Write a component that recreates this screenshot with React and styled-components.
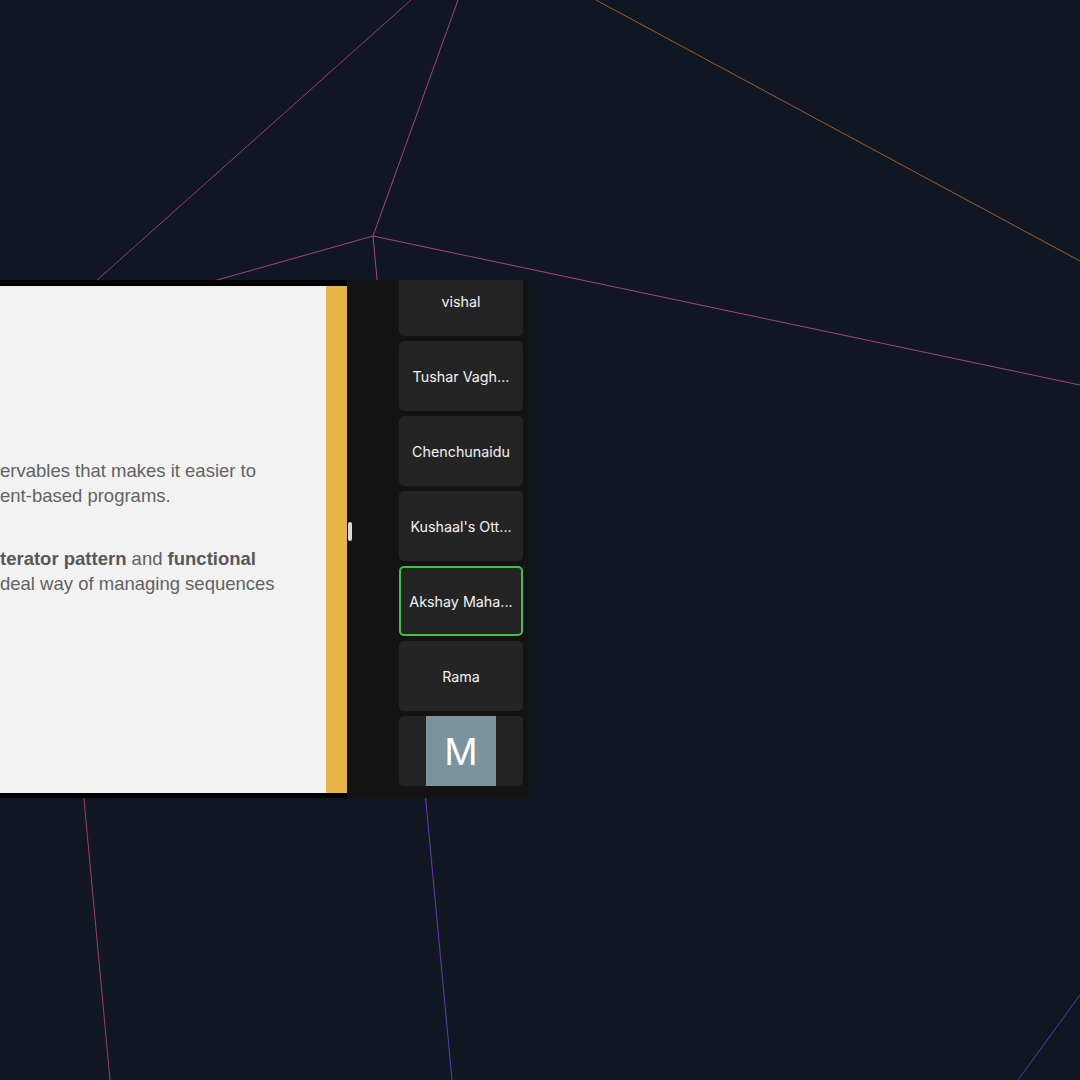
import React from 'react';
import styled, { createGlobalStyle } from 'styled-components';

const GlobalStyle = createGlobalStyle`
  html, body {
    margin: 0;
    padding: 0;
    background: #111722;
  }
  * {
    box-sizing: border-box;
  }
`;

const Page = styled.div`
  position: relative;
  width: 1080px;
  height: 1080px;
  overflow: hidden;
  padding-top: 280px;
  background: #111722;
`;

const Backdrop = styled.svg`
  position: absolute;
  inset: 0;
  width: 1080px;
  height: 1080px;
`;

const Window = styled.div`
  position: relative;
  z-index: 1;
  display: flex;
  width: 529px;
  height: 518px;
`;

const SlideFrame = styled.div`
  width: 347px;
  background: #000;
  padding: 6px 0 5px;
  display: flex;
`;

const Slide = styled.div`
  flex: 1;
  display: flex;
  background: #f2f2f2;
`;

const SlideBody = styled.div`
  flex: 1;
  overflow: hidden;
  padding-top: 172px;
  font-family: "Liberation Sans", Arial, sans-serif;
  font-size: 18.5px;
  line-height: 25px;
  color: #626262;

  p {
    margin: 0 0 38px;
    white-space: nowrap;
  }
  b {
    font-weight: 700;
    color: #585858;
  }
`;

const Accent = styled.div`
  width: 21px;
  background: #ebb44b;
`;

const Sidebar = styled.div`
  flex: 1;
  background: #131313;
  overflow: hidden;
  padding: 0 6px 0 52px;
`;

const TileList = styled.div`
  display: flex;
  flex-direction: column;
  gap: 5px;
  margin-top: -14px;
`;

const Tile = styled.div`
  height: 70px;
  border-radius: 5px;
  background: #242424;
  box-shadow: ${p => (p.$active ? 'inset 0 0 0 2px #3fc24b' : 'none')};
  display: flex;
  align-items: center;
  justify-content: center;
  overflow: hidden;
  font-family: Inter, "Noto Sans", sans-serif;
  font-size: 14.3px;
  color: #f2f2f2;
  white-space: nowrap;
`;

const Avatar = styled.div`
  width: 70px;
  height: 70px;
  background: #7b929f;
  display: flex;
  align-items: center;
  justify-content: center;
  font-family: Inter, "Noto Sans", sans-serif;
  font-size: 37px;
  color: #fff;
`;

const Handle = styled.div`
  position: absolute;
  left: 348px;
  top: 242px;
  width: 4px;
  height: 19px;
  border-radius: 2px;
  background: #d9d9d9;
`;

const people = [
  { name: 'vishal' },
  { name: 'Tushar Vagh...' },
  { name: 'Chenchunaidu' },
  { name: "Kushaal's Ott..." },
  { name: 'Akshay Maha...', active: true },
  { name: 'Rama' },
];

const edges = [
  { x1: 411, y1: 0, x2: 86, y2: 290, c: '#9c4069' },
  { x1: 458, y1: 0, x2: 373, y2: 236, c: '#a84573' },
  { x1: 373, y1: 236, x2: 1080, y2: 385, c: '#a84573' },
  { x1: 373, y1: 236, x2: 150, y2: 299, c: '#a84573' },
  { x1: 596, y1: 0, x2: 1080, y2: 261, c: '#9c5f2b' },
  { x1: 60, y1: 540, x2: 110, y2: 1080, c: '#9e405a' },
  { x1: 1080, y1: 995, x2: 1018, y2: 1080, c: '#573ab8' },
];

export default function App() {
  return (
    <>
      <GlobalStyle />
      <Page>
        <Backdrop viewBox="0 0 1080 1080">
          <defs>
            <linearGradient id="drop" gradientUnits="userSpaceOnUse" x1="373" y1="236" x2="452" y2="1080">
              <stop offset="0" stopColor="#a84573" />
              <stop offset="0.35" stopColor="#8040a0" />
              <stop offset="1" stopColor="#573ab8" />
            </linearGradient>
          </defs>
          {edges.map((e, i) => (
            <line key={i} x1={e.x1} y1={e.y1} x2={e.x2} y2={e.y2} stroke={e.c} strokeWidth="1" />
          ))}
          <line x1="373" y1="236" x2="452" y2="1080" stroke="url(#drop)" strokeWidth="1" />
        </Backdrop>

        <Window>
          <SlideFrame>
            <Slide>
              <SlideBody>
                <p>
                  ervables that makes it easier to
                  <br />
                  ent-based programs.
                </p>
                <p>
                  <b>terator pattern</b> and <b>functional</b>
                  <br />
                  deal way of managing sequences
                </p>
              </SlideBody>
              <Accent />
            </Slide>
          </SlideFrame>

          <Sidebar>
            <TileList>
              {people.map(p => (
                <Tile key={p.name} $active={p.active}>{p.name}</Tile>
              ))}
              <Tile>
                <Avatar>M</Avatar>
              </Tile>
            </TileList>
          </Sidebar>

          <Handle />
        </Window>
      </Page>
    </>
  );
}
